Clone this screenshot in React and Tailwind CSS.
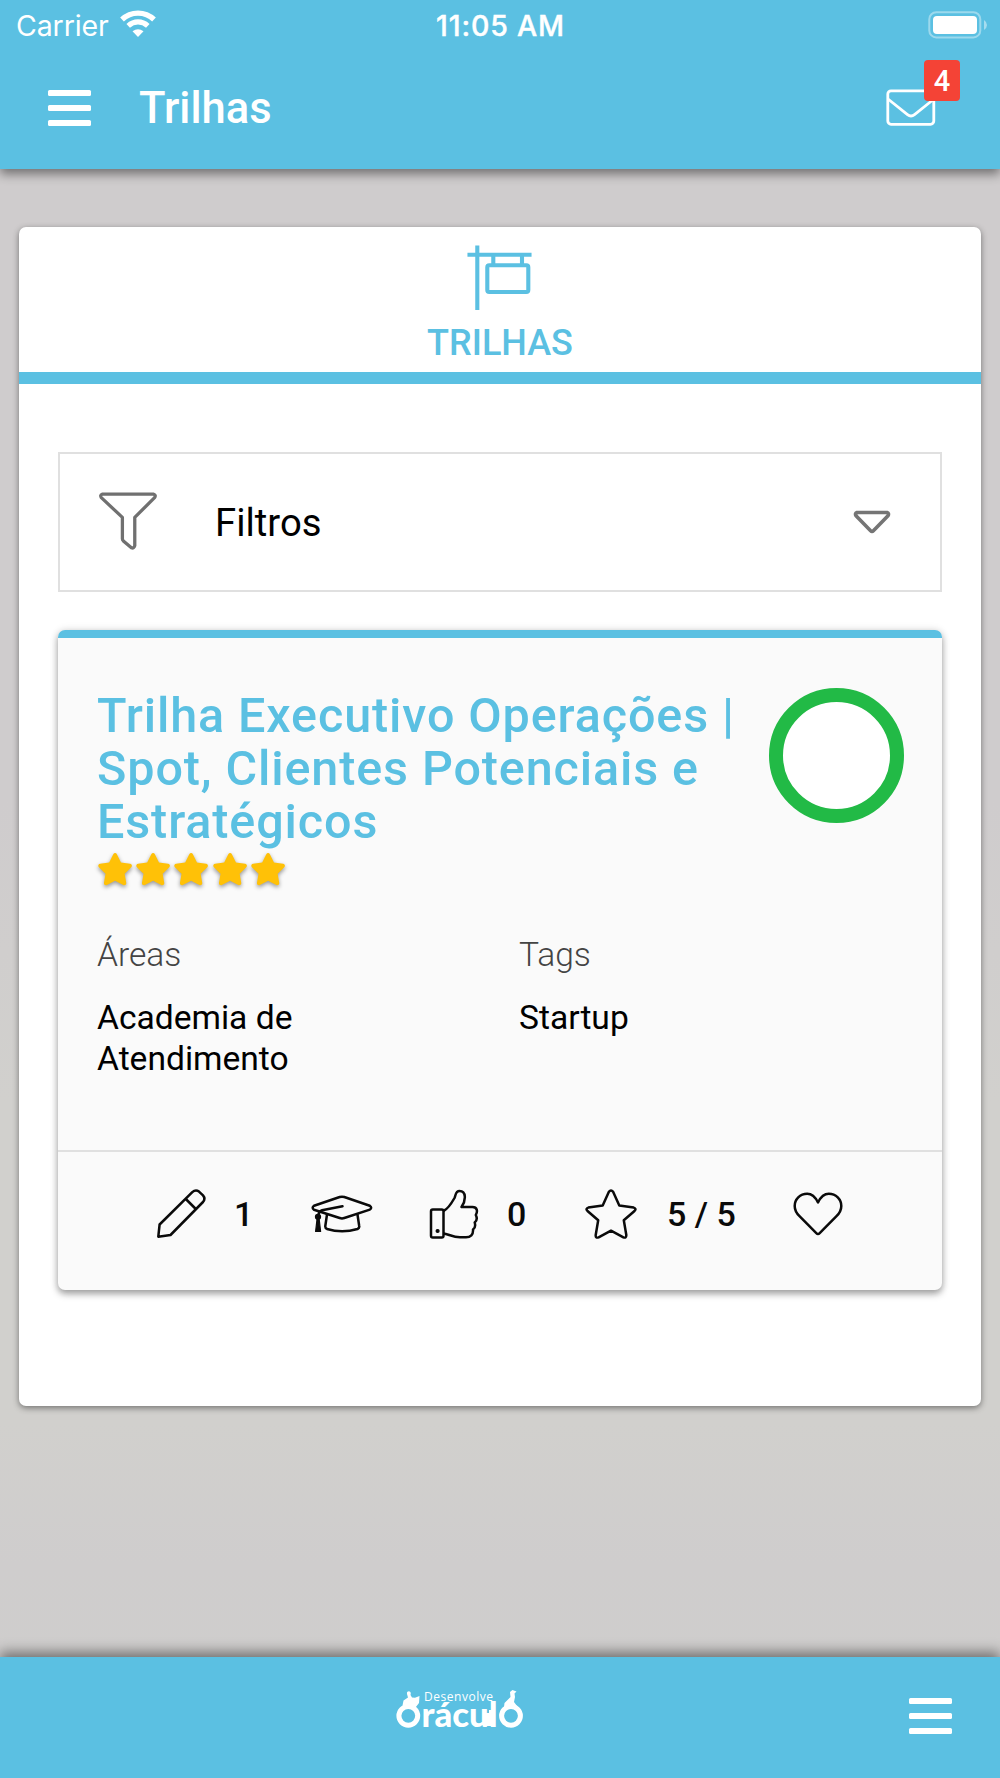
import { FaStar } from "react-icons/fa";

const MenuIcon = () => (
  <div className="flex flex-col gap-[9px] w-[43px]">
    <span className="h-[6px] rounded-[1.5px] bg-white"></span>
    <span className="h-[6px] rounded-[1.5px] bg-white"></span>
    <span className="h-[6px] rounded-[1.5px] bg-white"></span>
  </div>
);

const StatusBar = () => (
  <div className="h-[50px] flex items-center text-white font-['Inter',sans-serif] text-[28.5px] leading-none">
    <div className="flex-1 flex items-center pl-[16px] gap-[12px] pt-px">
      <span className="w-[92px] pt-px whitespace-nowrap tracking-[-0.1px]">Carrier</span>
      <svg width="36" height="28" viewBox="0 0 36 28" fill="none" stroke="#fff" className="-mt-[3px]">
        <path d="M2 9.5 C11 1 25 1 34 9.5" strokeWidth="5.4" />
        <path d="M8.2 15.8 C14 10.5 22 10.5 27.8 15.8" strokeWidth="5.2" />
        <path d="M12.5 21.3 Q18 17 23.5 21.3 L18 27 Z" fill="#fff" stroke="none" />
      </svg>
    </div>
    <span className="pt-[2px] pr-[3px] font-medium whitespace-nowrap tracking-[0.85px] [-webkit-text-stroke:0.4px_white]">11:05 AM</span>
    <div className="flex-1 flex justify-end items-center pr-[12px]">
      <svg width="60" height="28" viewBox="0 0 60 28" className="-mt-[1px]">
        <rect x="1.3" y="1.2" width="51" height="25.2" rx="7" fill="none" stroke="#fff" strokeOpacity="0.4" strokeWidth="2" />
        <rect x="5" y="5" width="44" height="18" rx="4" fill="#fff" />
        <path d="M56 9 Q59 11 59 14 Q59 17 56 19 Z" fill="#fff" fillOpacity="0.45" />
      </svg>
    </div>
  </div>
);

const Header = () => (
  <header className="relative h-[169px] bg-[#5bc0e2] shadow-[0_5px_10px_rgba(0,0,0,0.45)]">
    <StatusBar />
    <div className="h-[115px] flex items-center pl-[48px] pr-[64px]">
      <MenuIcon />
      <h1 className="ml-[48px] pt-[3px] text-[43.5px] font-medium text-white">Trilhas</h1>
      <div className="relative ml-auto">
        <svg width="50" height="37" viewBox="0 0 50 37" fill="none" stroke="#fff" strokeWidth="2.8" strokeLinejoin="round">
          <rect x="1.8" y="1.8" width="46" height="33.5" rx="3.2" />
          <path d="M2 10 L21.5 25.6 Q25 28.3 28.5 25.6 L48 10" />
        </svg>
        <span className="absolute -top-[29px] left-[38px] w-[36px] h-[41px] rounded-[4px] bg-[#f44336] text-white text-[29px] font-medium leading-[42px] text-center">4</span>
      </div>
    </div>
  </header>
);

const PencilIcon = () => (
  <svg width="50" height="50" viewBox="0 0 50 50" fill="none" stroke="#0a0a0a" strokeWidth="2.5" strokeLinejoin="round">
    <path d="M2.3 47.7 L3.6 35.5 L36.3 3.2 Q39.6 0.2 43 2.6 L47 6.4 Q49.8 9.8 47 13 L14.5 46 Z" />
    <path d="M29.8 10 L39.8 20" />
  </svg>
);

const GraduationIcon = () => (
  <svg width="62" height="38" viewBox="0 0 62 38" fill="none" stroke="#0a0a0a" strokeWidth="2.5" strokeLinejoin="round" strokeLinecap="round">
    <path d="M28.7 2 Q31 1.3 33.3 2 L58.8 10.7 Q61.5 12.6 58.8 14.6 L33.3 23 Q31 23.8 28.7 23 L3 14.8 Q0.3 12.7 3 10.7 Z" />
    <path d="M31.5 11.2 L11 15.3 Q7.5 16.3 7.5 21" />
    <path d="M16 19.5 L14.3 31 Q14 33 16 34 Q31 38.5 46.5 34 Q48.6 33 48.2 31 L46.5 19.5" />
    <circle cx="7" cy="21.8" r="1.9" fill="#0a0a0a" />
    <path d="M6.1 23.5 L4.6 36.5 H9.6 L8.1 23.5 Z" fill="#0a0a0a" strokeWidth="1.2" />
  </svg>
);

const ThumbIcon = () => (
  <svg width="50" height="50" viewBox="0 0 50 50" fill="none" stroke="#0a0a0a" strokeWidth="2.5" strokeLinejoin="round">
    <rect x="2" y="20.5" width="12.5" height="28" rx="1.8" />
    <circle cx="8.6" cy="42" r="1.4" fill="#0a0a0a" strokeWidth="1.4" />
    <path d="M14.5 22 C19 20 23.5 12.5 25.5 9 C27 5.5 26.5 2 30.5 2 C37.5 2 37 11.5 32.5 18 H43.5 C48 18 49 22 46.8 26 C48.3 29 47.5 32 45.7 33.5 C46.8 37 46 39 44 40.5 C44.5 45.5 41.5 48.3 37 48.3 H31 C24 48.3 19 45 14.5 44.5" />
  </svg>
);

const StarIcon = () => (
  <svg width="52" height="50" viewBox="0 0 52 50" fill="none" stroke="#0a0a0a" strokeWidth="2.5" strokeLinejoin="round">
    <path d="M23.9 2.8 Q26 0 28.1 2.8 L34.3 16.6 L48.7 18.6 Q51.8 19.6 49.5 22 L38.8 31.3 L41.3 46 Q41.4 49.5 38.4 48.3 L26 41.7 L13.6 48.3 Q10.4 49.5 10.7 46 L13.2 31.3 L2.5 22 Q0.2 19.6 3.3 18.6 L17.7 16.6 Z" />
  </svg>
);

const HeartIcon = () => (
  <svg width="50" height="44" viewBox="0 0 50 44" fill="none" stroke="#0a0a0a" strokeWidth="2.5" strokeLinejoin="round">
    <path d="M25 10.5 C21.8 4 18 1.8 14.2 1.8 C7 1.8 1.7 7.5 1.7 14 C1.7 18.5 3.5 21.3 6.5 24.2 L23.3 41.2 Q25 43 26.7 41.2 L43.5 24.2 C46.5 21.3 48.3 18.5 48.3 14 C48.3 7.5 43 1.8 35.8 1.8 C32 1.8 28.2 4 25 10.5 Z" />
  </svg>
);

const SignIcon = () => (
  <svg width="66" height="66" viewBox="0 0 66 66" fill="none" stroke="#5bc0e2" strokeWidth="4.1" strokeLinecap="square">
    <path d="M10.3 2.5 V63 M2.5 9.7 H62.5 M26.3 12 V18 M55 12 V18" />
    <rect x="20.3" y="20.2" width="41" height="26.8" rx="2" />
  </svg>
);

const FilterIcon = () => (
  <svg width="58" height="58" viewBox="0 0 60 60" fill="none" stroke="#707070" strokeWidth="3.4" strokeLinejoin="round" className="-mt-[2px]">
    <path d="M3.2 2.3 H56.6 Q59.2 3.2 57.5 5.8 L37 26.3 V55.5 Q36.2 58.7 33.5 57.7 L25.2 50.6 Q24.2 49.5 24.2 48.3 V26.3 L2.4 5.8 Q0.8 3.2 3.2 2.3 Z" />
  </svg>
);

const Logo = () => (
  <svg width="130" height="52" viewBox="0 0 130 52" fill="#fff" className="overflow-visible">
    <text x="29" y="12.5" fontSize="12" textLength="69" fontFamily="'Open Sans', sans-serif">Desenvolve</text>
    <text x="26.5" y="38.5" fontSize="34" fontWeight="900" textLength="76" lengthAdjust="spacingAndGlyphs" fontFamily="Lato, sans-serif">rácul</text>
    <g fill="none" stroke="#fff" strokeWidth="5">
      <circle cx="13.3" cy="27.8" r="9.4" />
      <circle cx="116" cy="27.8" r="9.4" />
    </g>
    <path d="M7.5 17.5 L8.5 12.5 L13 9.5 L12 6 Q11.5 3.5 14 3.3 Q16.5 4 15.5 7 L17 9.5 L20 9.8 L24.5 8 L24 15 L20.5 19.5 Z" />
    <path d="M109 19 L109.5 15 L115.5 9 L115 4 L117.5 2 L121.5 3.5 L119.5 5.5 L120 9 L119 14 L122 18 L116 21 Z" />
    <path d="M90 25 H94 V22 H97 V38 H90 Z" />
  </svg>
);

const Footer = () => (
  <footer className="relative h-[121px] bg-[#5bc0e2] flex items-center shadow-[0_-5px_12px_rgba(0,0,0,0.45)]">
    <div className="ml-[395px] -mt-[8px]">
      <Logo />
    </div>
    <div className="ml-auto mr-[48px] -mt-[3px]">
      <MenuIcon />
    </div>
  </footer>
);

const TrailCard = () => (
  <div className="mt-[38px] h-[660px] flex flex-col rounded-[7px] bg-[#fafafa] shadow-[0_4px_7px_rgba(0,0,0,0.34),0_0_8px_rgba(0,0,0,0.12)]">
    <div className="h-[8px] shrink-0 rounded-t-[7px] bg-[#5bc0e2]"></div>
    <div className="flex-1 pl-[39px] pr-[38px] pt-[50px]">
      <div className="flex justify-between">
        <div>
          <h2 className="pt-px text-[48.5px] leading-[53.1px] font-medium tracking-[0.88px] text-[#5bc0e2] whitespace-nowrap">
            Trilha Executivo Operações |<br />
            Spot, Clientes Potenciais e<br />
            Estratégicos
          </h2>
          <div className="mt-[3px] flex gap-[2px] text-[#ffc107]">
            {[1, 2, 3, 4, 5].map((n) => (
              <FaStar key={n} className="size-[36.2px] drop-shadow-[0_2px_2px_rgba(0,0,0,0.4)]" />
            ))}
          </div>
        </div>
        <div className="size-[135px] rounded-full border-[14px] border-[#22ba46] bg-white"></div>
      </div>
      <div className="mt-[43px] grid grid-cols-[422px_1fr] text-[33.6px]">
        <div>
          <p className="font-light leading-[50px] text-[#444]">Áreas</p>
          <p className="mt-[17px] w-[260px] leading-[41px] text-black">Academia de Atendimento</p>
        </div>
        <div>
          <p className="font-light leading-[50px] text-[#444]">Tags</p>
          <p className="mt-[17px] leading-[41px] text-black">Startup</p>
        </div>
      </div>
    </div>
    <div className="h-[140px] shrink-0 border-t-2 border-[#e0e0e0] flex items-center pl-[98px] pb-[14px] text-[34px] font-medium text-[#0a0a0a]">
      <PencilIcon />
      <span className="w-[75px] pl-[28px] pt-px">1</span>
      <div className="w-[62px] ml-[30px]"><GraduationIcon /></div>
      <div className="ml-[56px]"><ThumbIcon /></div>
      <span className="w-[48px] ml-[28px] pt-px">0</span>
      <div className="ml-[30px]"><StarIcon /></div>
      <span className="w-[70px] ml-[30px] pt-px whitespace-nowrap">5 / 5</span>
      <div className="ml-[56px]"><HeartIcon /></div>
    </div>
  </div>
);

export default function App() {
  return (
    <div className="w-[1000px] h-[1778px] flex flex-col overflow-hidden bg-[linear-gradient(#cfcccd_0%,#cfcccd_45%,#d1d0cd_62%,#d1d0cd_80%,#cfcdcd_88%,#cfcecc_100%)] font-['Roboto',sans-serif]">
      <Header />
      <main className="flex-1 px-[19px] pt-[58px]">
        <section className="h-[1179px] rounded-[7px] bg-white shadow-[0_2px_6px_rgba(0,0,0,0.45)]">
          <div className="h-[157px] flex flex-col items-center border-b-[12px] border-[#5bc0e2] pt-[18px]">
            <SignIcon />
            <span className="mt-[8px] text-[36px] leading-[48px] font-medium text-[#5bc0e2]">TRILHAS</span>
          </div>
          <div className="px-[39px] pt-[68px]">
            <div className="h-[140px] flex items-center border-2 border-[#e0e0e0] pl-[39px] pr-[49px]">
              <FilterIcon />
              <span className="ml-[58px] pt-[2px] text-[38.3px] text-black">Filtros</span>
              <svg width="38" height="24" viewBox="0 0 38 24" fill="none" stroke="#757575" strokeWidth="3.6" strokeLinejoin="round" className="ml-auto -mt-px">
                <path d="M4 2.5 H34 Q36.5 3.5 35 5.8 L20.4 20.8 Q19 22.2 17.6 20.8 L3 5.8 Q1.5 3.5 4 2.5 Z" />
              </svg>
            </div>
            <TrailCard />
          </div>
        </section>
      </main>
      <Footer />
    </div>
  );
}
